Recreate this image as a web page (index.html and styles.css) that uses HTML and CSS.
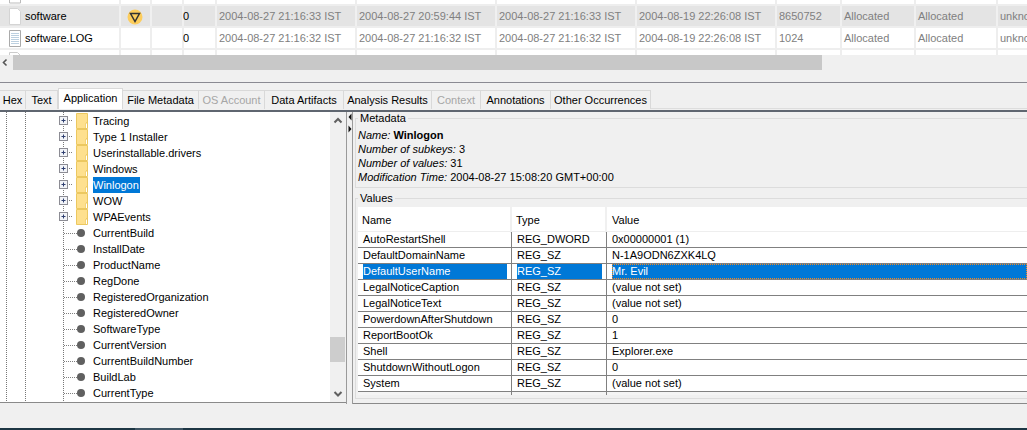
FILE: index.html
```html
<!DOCTYPE html>
<html lang="en">
<head>
<meta charset="utf-8">
<title>Autopsy registry viewer</title>
<link rel="stylesheet" href="styles.css">
</head>
<body>
<div class="page">
  <section class="files">
    <div class="frow stub">
      <div class="fc name"><svg class="doc" viewBox="0 0 14 17"><path d="M1.5 -8h8l3 3v8h-11z" fill="#fff" stroke="#bbb"/></svg></div>
      <div class="fc"></div><div class="fc"></div><div class="fc"></div><div class="fc"></div><div class="fc"></div><div class="fc"></div><div class="fc"></div><div class="fc"></div><div class="fc"></div><div class="fc"></div><div class="fc"></div>
    </div>
    <div class="frow sel">
      <div class="fc name"><svg class="doc" viewBox="0 0 14 17"><path d="M1.5 .5h8l3 3v13h-11z" fill="#fff" stroke="#d4d4d4"/></svg><span>software</span></div>
      <div class="fc flag"><svg width="16" height="16" viewBox="0 0 16 16"><circle cx="8" cy="8" r="7.5" fill="#fdcd5c"/><path d="M3.5 4.5h9L8 12.5z" fill="none" stroke="#333" stroke-width="1.5"/></svg></div>
      <div class="fc blank"></div>
      <div class="fc count">0</div>
      <div class="fc">2004-08-27 21:16:33 IST</div>
      <div class="fc">2004-08-27 20:59:44 IST</div>
      <div class="fc">2004-08-27 21:16:33 IST</div>
      <div class="fc">2004-08-19 22:26:08 IST</div>
      <div class="fc">8650752</div>
      <div class="fc">Allocated</div>
      <div class="fc">Allocated</div>
      <div class="fc">unknown</div>
    </div>
    <div class="frow">
      <div class="fc name"><svg class="doc" viewBox="0 0 14 17"><path d="M1.5 .5h11v16h-11z" fill="#fff" stroke="#aaa"/><path d="M3 3.5h8M3 5.5h8M3 7.5h8M3 9.5h8M3 11.5h8M3 13.5h8" stroke="#bcd0e0"/></svg><span>software.LOG</span></div>
      <div class="fc flag"></div>
      <div class="fc blank"></div>
      <div class="fc count">0</div>
      <div class="fc">2004-08-27 21:16:32 IST</div>
      <div class="fc">2004-08-27 21:16:32 IST</div>
      <div class="fc">2004-08-27 21:16:32 IST</div>
      <div class="fc">2004-08-19 22:26:08 IST</div>
      <div class="fc">1024</div>
      <div class="fc">Allocated</div>
      <div class="fc">Allocated</div>
      <div class="fc">unknown</div>
    </div>
    <div class="frow tail">
      <div class="fc name"><svg class="doc" viewBox="0 0 14 17"><path d="M1.5 .5h8l3 3v13h-11z" fill="#fff" stroke="#ccc"/></svg></div>
      <div class="fc"></div><div class="fc"></div><div class="fc"></div><div class="fc"></div><div class="fc"></div><div class="fc"></div><div class="fc"></div><div class="fc"></div><div class="fc"></div><div class="fc"></div><div class="fc"></div>
    </div>
  </section>

  <div class="hscroll">
    <svg class="harrow" width="13" height="15" viewBox="0 0 13 15"><path d="M6.5 4.500L3.500 7.500l3 3" fill="none" stroke="#555" stroke-width="1.6"/></svg>
    <div class="hthumb"></div>
  </div>

  <div class="splitbar"></div>

  <nav class="tabs">
    <span class="tab t-hex">Hex</span>
    <span class="tab t-text">Text</span>
    <span class="tab active t-app">Application</span>
    <span class="tab t-file">File Metadata</span>
    <span class="tab off t-os">OS Account</span>
    <span class="tab t-data">Data Artifacts</span>
    <span class="tab t-ana">Analysis Results</span>
    <span class="tab off t-ctx">Context</span>
    <span class="tab t-ann">Annotations</span>
    <span class="tab t-oth">Other Occurrences</span>
  </nav>

  <main class="main">
    <aside class="tree">
      <ul class="nodes">
        <li class="node"><svg class="exp" viewBox="0 0 16 16"><use href="#expander"/></svg><svg class="folder" viewBox="0 0 12 16"><use href="#folder"/></svg><span class="lbl">Tracing</span></li>
        <li class="node"><svg class="exp" viewBox="0 0 16 16"><use href="#expander"/></svg><svg class="folder" viewBox="0 0 12 16"><use href="#folder"/></svg><span class="lbl">Type 1 Installer</span></li>
        <li class="node"><svg class="exp" viewBox="0 0 16 16"><use href="#expander"/></svg><svg class="folder" viewBox="0 0 12 16"><use href="#folder"/></svg><span class="lbl">Userinstallable.drivers</span></li>
        <li class="node"><svg class="exp" viewBox="0 0 16 16"><use href="#expander"/></svg><svg class="folder" viewBox="0 0 12 16"><use href="#folder"/></svg><span class="lbl">Windows</span></li>
        <li class="node"><svg class="exp" viewBox="0 0 16 16"><use href="#expander"/></svg><svg class="folder" viewBox="0 0 12 16"><use href="#folder"/></svg><span class="lbl picked">Winlogon</span></li>
        <li class="node"><svg class="exp" viewBox="0 0 16 16"><use href="#expander"/></svg><svg class="folder" viewBox="0 0 12 16"><use href="#folder"/></svg><span class="lbl">WOW</span></li>
        <li class="node"><svg class="exp" viewBox="0 0 16 16"><use href="#expander"/></svg><svg class="folder" viewBox="0 0 12 16"><use href="#folder"/></svg><span class="lbl">WPAEvents</span></li>
        <li class="node leaf"><span class="dash"></span><i class="bullet"></i><span class="lbl">CurrentBuild</span></li>
        <li class="node leaf"><span class="dash"></span><i class="bullet"></i><span class="lbl">InstallDate</span></li>
        <li class="node leaf"><span class="dash"></span><i class="bullet"></i><span class="lbl">ProductName</span></li>
        <li class="node leaf"><span class="dash"></span><i class="bullet"></i><span class="lbl">RegDone</span></li>
        <li class="node leaf"><span class="dash"></span><i class="bullet"></i><span class="lbl">RegisteredOrganization</span></li>
        <li class="node leaf"><span class="dash"></span><i class="bullet"></i><span class="lbl">RegisteredOwner</span></li>
        <li class="node leaf"><span class="dash"></span><i class="bullet"></i><span class="lbl">SoftwareType</span></li>
        <li class="node leaf"><span class="dash"></span><i class="bullet"></i><span class="lbl">CurrentVersion</span></li>
        <li class="node leaf"><span class="dash"></span><i class="bullet"></i><span class="lbl">CurrentBuildNumber</span></li>
        <li class="node leaf"><span class="dash"></span><i class="bullet"></i><span class="lbl">BuildLab</span></li>
        <li class="node leaf"><span class="dash"></span><i class="bullet"></i><span class="lbl">CurrentType</span></li>
      </ul>
      <div class="vscroll">
        <svg width="16" height="16" viewBox="0 0 16 16"><path d="M4.500 10.500L8 7l3.500 3.500" fill="none" stroke="#606060" stroke-width="2"/></svg>
        <div class="vthumb"></div>
        <svg width="16" height="16" viewBox="0 0 16 16"><path d="M4.500 6L8 9.500 11.500 6" fill="none" stroke="#606060" stroke-width="2"/></svg>
      </div>
    </aside>

    <div class="divider">
      <svg width="4" height="24" viewBox="0 0 4 24"><path d="M3.500 .5v7L.5 4zM.5 12.500v7l3-3.500z" fill="#111"/></svg>
    </div>

    <div class="detail">
      <fieldset class="group meta">
        <legend>Metadata</legend>
        <p class="line title"><em>Name:</em> <b>Winlogon</b></p>
        <p class="line"><em>Number of subkeys:</em> 3</p>
        <p class="line"><em>Number of values:</em> 31</p>
        <p class="line"><em>Modification Time:</em> 2004-08-27 15:08:20 GMT+00:00</p>
      </fieldset>
      <fieldset class="group vals">
        <legend>Values</legend>
        <div class="grid">
          <div class="head"><span>Name</span><span>Type</span><span>Value</span></div>
          <div class="vrow"><span>AutoRestartShell</span><span>REG_DWORD</span><span>0x00000001 (1)</span></div>
          <div class="vrow"><span>DefaultDomainName</span><span>REG_SZ</span><span>N-1A9ODN6ZXK4LQ</span></div>
          <div class="vrow on"><span><b>DefaultUserName</b></span><span><b>REG_SZ</b></span><span><b class="focus">Mr. Evil</b></span></div>
          <div class="vrow"><span>LegalNoticeCaption</span><span>REG_SZ</span><span>(value not set)</span></div>
          <div class="vrow"><span>LegalNoticeText</span><span>REG_SZ</span><span>(value not set)</span></div>
          <div class="vrow"><span>PowerdownAfterShutdown</span><span>REG_SZ</span><span>0</span></div>
          <div class="vrow"><span>ReportBootOk</span><span>REG_SZ</span><span>1</span></div>
          <div class="vrow"><span>Shell</span><span>REG_SZ</span><span>Explorer.exe</span></div>
          <div class="vrow"><span>ShutdownWithoutLogon</span><span>REG_SZ</span><span>0</span></div>
          <div class="vrow"><span>System</span><span>REG_SZ</span><span>(value not set)</span></div>
          <div class="vrow cut"><span></span><span></span><span></span></div>
        </div>
      </fieldset>
    </div>
  </main>

  <div class="status"></div>
  <div class="taskbar"><i class="taskitem"></i></div>
</div>

<svg class="defs" width="0" height="0" aria-hidden="true">
  <symbol id="expander" viewBox="0 0 16 16">
    <rect x="0.5" y="3.500" width="8" height="8" fill="#f2f4f8" stroke="#8c8c94"/>
    <path d="M2.500 7.500h4M4.500 5.500v4" stroke="#2f3f70"/>
    <path d="M10 7.500h1M12 7.500h1" stroke="#808080"/>
  </symbol>
  <symbol id="folder" viewBox="0 0 12 16">
    <path d="M.5 .5h11v9.500h-1.500v5.500h-9.500z" fill="#fee08e" stroke="#ecc860"/>
    <path d="M10 10h1.500v5.500h-1.500" fill="#fff" stroke="#ecc860"/>
  </symbol>
</svg>
</body>
</html>
```
FILE: styles.css
```css
* { box-sizing: border-box; }
html, body { margin: 0; padding: 0; }
body {
  width: 1027px;
  height: 430px;
  overflow: hidden;
  background: #f0f0f0;
  color: #000;
  font: 11px/16px "Liberation Sans", Arial, sans-serif;
}
.page { display: flex; flex-direction: column; height: 430px; }
.defs { position: absolute; }

/* file table */
.files { height: 55px; background: #fff; overflow: hidden; flex: none; }
.frow {
  display: grid;
  grid-template-columns: 121px 31px 32px 33px 140px 140px 140px 140px 65px 74px 82px 1fr;
  height: 22px;
  color: #808080;
  border-bottom: 2px solid #eeeeee;
}
.frow.stub { height: 6px; }
.frow.sel { background: #e4e4e4; }
.frow.tail { height: 5px; border-bottom: 0; }
.fc {
  border-right: 2px solid #eeeeee;
  padding: 2px 0 0 2px;
  white-space: nowrap;
  overflow: hidden;
  min-width: 0;
}
.sel .fc { border-right-color: #f0f0f0; }
.fc:last-child { border-right: 0; }
.name { display: flex; align-items: center; color: #000; gap: 3px; padding: 0 0 0 8px; }
.count { color: #000; padding-left: 0; margin-left: -1px; }
.stub .fc, .tail .fc { padding-top: 0; }
.doc { width: 14px; height: 17px; flex: none; }
.stub .name { align-items: flex-start; }
.tail .name { align-items: flex-start; padding-top: 2px; }
.flag { padding: 3px 0 0 6px; }

.hscroll { height: 15px; display: flex; background: #f0f0f0; flex: none; }
.harrow { flex: none; }
.hthumb { width: 809px; background: #c8c8c8; }

.splitbar { height: 8px; margin-top: 12px; border-top: 1px solid #8a8a92; flex: none; }

/* tabs */
.tabs {
  height: 22px;
  display: flex;
  align-items: flex-start;
  border-bottom: 2px solid #5f6670;
  background: linear-gradient(#dddddd, #dddddd) 0 18px / 100% 1px no-repeat;
  flex: none;
}
.tab {
  height: 19px;
  border: 1px solid #d9d9d9;
  border-left: 0;
  border-bottom: 0;
  text-align: center;
  line-height: 19px;
  background: #f0f0f0;
  white-space: nowrap;
}
.tab.active { background: #fff; height: 21px; margin-top: -2px; border-left: 1px solid #d9d9d9; }
.tab.off { color: #a6a6a6; }
.t-hex { width: 26px; }
.t-text { width: 32px; }
.t-app { width: 65px; }
.t-file { width: 76px; }
.t-os { width: 66px; }
.t-data { width: 79px; }
.t-ana { width: 88px; }
.t-ctx { width: 49px; }
.t-ann { width: 70px; }
.t-oth { width: 100px; }

/* main */
.main { height: 292px; display: flex; flex: none; }
.tree {
  width: 346px;
  height: 291px;
  display: flex;
  background: #fff;
  border-bottom: 1px solid #8a8a8a;
  overflow: hidden;
}
.nodes {
  list-style: none;
  margin: 0;
  padding: 1px 0 0 59px;
  flex: 1;
  min-width: 0;
  background-image:
    repeating-linear-gradient(#777 0 1px, transparent 1px 2px),
    repeating-linear-gradient(#777 0 1px, transparent 1px 2px),
    repeating-linear-gradient(#777 0 1px, transparent 1px 2px);
  background-size: 1px 100%;
  background-position: 6px 0, 25px 0, 63px 0;
  background-repeat: no-repeat;
}
.node { height: 16px; display: flex; align-items: center; white-space: nowrap; }
.exp { width: 16px; height: 16px; margin-right: 1px; flex: none; }
.folder { width: 12px; height: 16px; margin-right: 5px; flex: none; }
.lbl { display: block; height: 16px; padding-right: 1px; }
.picked { background: #0078d7; color: #fff; }
.dash {
  width: 13px;
  height: 1px;
  margin-left: 5px;
  background: repeating-linear-gradient(90deg, #808080 0 1px, transparent 1px 2px);
  flex: none;
}
.bullet {
  width: 8px;
  height: 8px;
  border-radius: 50%;
  background: #606060;
  margin: 0 8px 0 0;
  flex: none;
}
.vscroll {
  width: 16px;
  flex: none;
  background: #f0f0f0;
  display: flex;
  flex-direction: column;
  align-items: center;
  justify-content: space-between;
  position: relative;
}
.vthumb { position: absolute; top: 225px; left: 0; width: 15px; height: 25px; background: #cdcdcd; }

.divider {
  width: 7px;
  height: 292px;
  padding: 1px 0 0 1px;
  border-left: 1px solid #9a9a9a;
  border-right: 1px solid #9a9a9a;
  flex: none;
  background: #f0f0f0;
}
.divider svg { display: block; }

.detail {
  flex: 1;
  min-width: 0;
  padding-left: 2px;
  border-bottom: 1px solid #8a8a8a;
  overflow: hidden;
}
.group {
  margin: 0;
  padding: 0 0 0 2px;
  border: 0;
  border-top: 1px solid #dcdcdc;
  border-left: 1px solid #dcdcdc;
  min-width: 0;
}
.group legend {
  padding: 0 2px;
  margin-left: 0;
  line-height: 12px;
  height: 12px;
}
.meta { height: 76px; border-bottom: 1px solid #dcdcdc; }
.line { margin: 0; height: 14px; line-height: 14px; white-space: nowrap; }
.title { margin-top: 4px; }
.vals { margin-top: 4px; height: 207px; border-bottom: 1px solid #dcdcdc; }
.grid { margin-top: 3px; }
.head, .vrow {
  display: grid;
  grid-template-columns: 154px 95px 1fr;
}
.head {
  height: 25px;
  background: #fff;
  border-bottom: 1px solid #eeeeee;
  line-height: 26px;
}
.head span { padding-left: 4px; border-right: 2px solid #f0f0f0; }
.head span:last-child { border-right: 0; padding-left: 5px; }
.vrow { height: 16px; background: #fff; border-bottom: 1px solid #808080; line-height: 15px; }
.vrow span { padding-left: 5px; border-right: 1px solid #808080; white-space: nowrap; overflow: hidden; }
.vrow span:last-child { border-right: 0; }
.vrow b { font-weight: normal; display: block; height: 15px; }
.on span:first-child, .on span:nth-child(2) { padding: 0 4px 0 5px; }
.on b { background: #0078d7; color: #fff; }
.on span:last-child b {
  outline: 1px dotted #f08a24;
  outline-offset: -1px;
}
.vrow.cut { height: 3px; border-bottom: 0; background: #f4f4f4; }

.status { flex: 1; background: #f0f0f0; }
.taskbar { height: 2px; background: #1d3644; flex: none; padding-left: 135px; }
.taskitem { display: block; width: 48px; height: 2px; background: #3f5564; }
```
